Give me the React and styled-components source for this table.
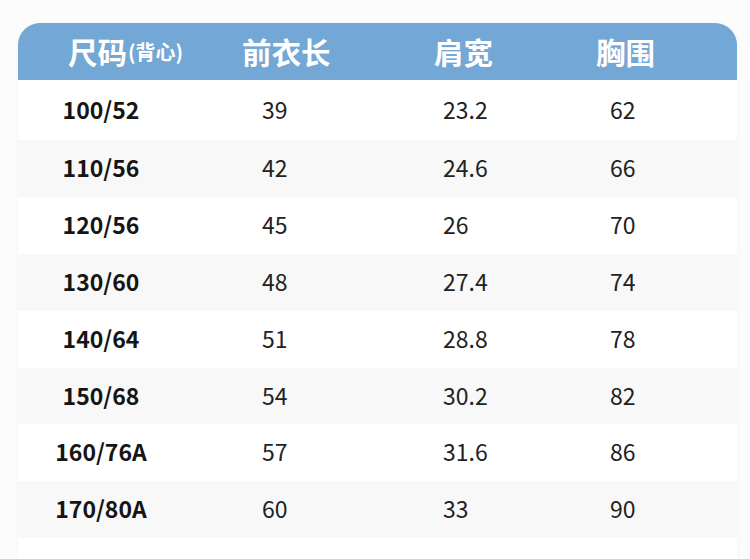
import React from "react";
import styled, { createGlobalStyle } from "styled-components";

const Global = createGlobalStyle`
  html, body { margin: 0; padding: 0; background: #fcfcfc; }
  body { font-family: "Noto Sans CJK SC", "Noto Sans", sans-serif; }
`;

const Page = styled.div`
  width: 750px;
  height: 559px;
  overflow: hidden;
  padding: 23px 13px 0 18px;
  box-sizing: border-box;
`;

const Card = styled.div`
  width: 719px;
  background: #ffffff;
  border-radius: 22px 22px 0 0;
  box-shadow: 0 0 6px rgba(0, 0, 0, 0.035);
  overflow: hidden;
`;

const Grid = styled.div`
  display: grid;
  grid-template-columns: 166px 177px 167px 1fr;
`;

const HeadCell = styled.div`
  height: 57px;
  background: #73a7d5;
  color: #ffffff;
  font-weight: 700;
  font-size: 29.5px;
  display: flex;
  align-items: center;
  padding-left: ${(p) => p.$pad}px;
  padding-bottom: 2px;
  box-sizing: border-box;
  white-space: nowrap;
`;

const Small = styled.span`
  font-size: 20px;
  margin-left: 1px;
  position: relative;
  top: 1px;
`;

const Cell = styled.div`
  height: ${(p) => (p.$first ? 60 : 56.9)}px;
  background: ${(p) => (p.$alt ? "#f8f8f8" : "#ffffff")};
  display: flex;
  align-items: center;
  justify-content: ${(p) => (p.$center ? "center" : "flex-start")};
  padding-left: ${(p) => p.$pad || 0}px;
  padding-bottom: 3px;
  box-sizing: border-box;
  font-size: 23px;
  font-weight: ${(p) => (p.$bold ? 700 : 400)};
  color: ${(p) => (p.$bold ? "#151515" : "#222222")};
  white-space: nowrap;
`;

const rows = [
  ["100/52", "39", "23.2", "62"],
  ["110/56", "42", "24.6", "66"],
  ["120/56", "45", "26", "70"],
  ["130/60", "48", "27.4", "74"],
  ["140/64", "51", "28.8", "78"],
  ["150/68", "54", "30.2", "82"],
  ["160/76A", "57", "31.6", "86"],
  ["170/80A", "60", "33", "90"],
  ["", "", "", ""],
];

const dataPads = [0, 78, 82, 82];

export default function App() {
  return (
    <>
      <Global />
      <Page>
        <Card>
          <Grid>
            <HeadCell $pad={50}>
              尺码<Small>(背心)</Small>
            </HeadCell>
            <HeadCell $pad={58}>前衣长</HeadCell>
            <HeadCell $pad={73}>肩宽</HeadCell>
            <HeadCell $pad={68}>胸围</HeadCell>
            {rows.map((r, i) =>
              r.map((v, j) => (
                <Cell
                  key={`${i}-${j}`}
                  $first={i === 0}
                  $alt={i % 2 === 1}
                  $center={j === 0}
                  $bold={j === 0}
                  $pad={dataPads[j]}
                >
                  {v}
                </Cell>
              ))
            )}
          </Grid>
        </Card>
      </Page>
    </>
  );
}
